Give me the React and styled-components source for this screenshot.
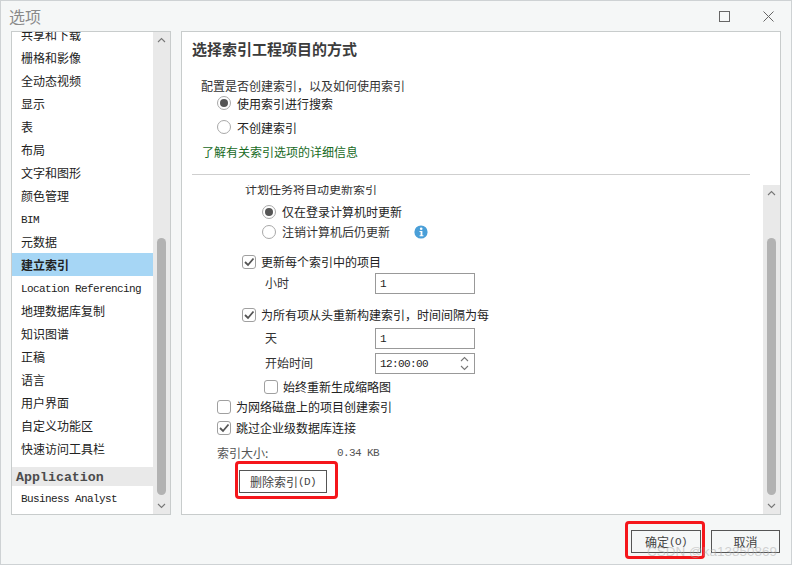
import React from 'react';
import styled, { createGlobalStyle } from 'styled-components';

const cjk = '"Noto Sans CJK SC", "Noto Sans", sans-serif';
const mono = '"Liberation Mono", "Noto Sans CJK SC", monospace';

const GlobalStyle = createGlobalStyle`
  html, body {
    margin: 0;
    padding: 0;
    background: #f5f7f7;
  }
  * {
    box-sizing: border-box;
  }
`;

const Dialog = styled.div`
  position: relative;
  width: 792px;
  height: 565px;
  display: flex;
  flex-direction: column;
  overflow: hidden;
  background: #f5f7f7;
  border: 1px solid #ced2d4;
  font-family: ${cjk};
  font-size: 12px;
  color: #333;
`;

const TitleBar = styled.div`
  height: 30px;
  flex: none;
  display: flex;
  align-items: center;
  padding: 0 1px 0 8px;
`;

const Title = styled.div`
  flex: 1;
  font-size: 16px;
  color: #8a8a8a;
`;

const WindowButton = styled.div`
  width: 44px;
  height: 30px;
  display: flex;
  align-items: center;
  justify-content: center;
`;

const Body = styled.div`
  height: 484px;
  flex: none;
  display: flex;
  gap: 10px;
  padding: 0 10px;
`;

const Panel = styled.div`
  display: flex;
  background: #fff;
  border: 1px solid #c8cccc;
  width: ${(p) => p.$width}px;
  overflow: hidden;
`;

const NavList = styled.div`
  flex: 1;
  min-width: 0;
  overflow: hidden;
`;

const NavItems = styled.div`
  margin-top: -9px;
`;

const NavItem = styled.div`
  height: 23px;
  line-height: 23px;
  padding-left: 9px;
  white-space: nowrap;
  color: #222;
  font-weight: ${(p) => (p.$active ? 700 : 400)};
  background: ${(p) => (p.$active ? '#a6d6f5' : 'transparent')};
`;

const NavLatin = styled(NavItem)`
  line-height: 26px;
  font-family: ${mono};
  font-size: 11px;
  letter-spacing: -0.6px;
`;

const NavGroup = styled.div`
  height: 19px;
  line-height: 21px;
  margin-top: 7px;
  padding-left: 4px;
  background: #e9e9e9;
  color: #4c4c4c;
  font-family: ${mono};
  font-size: 13.3px;
  font-weight: 700;
`;

const ScrollTrack = styled.div`
  width: 17px;
  flex: none;
  display: flex;
  flex-direction: column;
  align-items: center;
  background: #e9e9e9;
`;

const ScrollArrow = styled.div`
  height: 16px;
  flex: none;
  display: flex;
  align-items: center;
  justify-content: center;
  margin-top: ${(p) => (p.$down ? 'auto' : '0')};
`;

const ScrollThumb = styled.div`
  width: 9px;
  height: 257px;
  flex: none;
  margin-top: ${(p) => p.$top}px;
  border-radius: 5px;
  background: #b2b2b2;
`;

const Content = styled.div`
  flex: 1;
  min-width: 0;
  display: flex;
  flex-direction: column;
`;

const TopSection = styled.div`
  height: 142px;
  flex: none;
  padding: 0 30px 0 10px;
`;

const Heading = styled.h2`
  margin: 0;
  height: 35px;
  padding-top: 7px;
  line-height: 20px;
  font-size: 15px;
  font-weight: 700;
  color: #3c3c3c;
`;

const Row = styled.div`
  display: flex;
  align-items: center;
  white-space: nowrap;
  height: ${(p) => p.$h || 20}px;
  margin-top: ${(p) => p.$top || 0}px;
  padding-left: ${(p) => p.$indent || 0}px;
  color: ${(p) => p.$color || '#333'};
`;

const Divider = styled.div`
  height: 1px;
  flex: none;
  margin: 0 30px 0 10px;
  background: #cfcfcf;
`;

const LowerSection = styled.div`
  flex: 1;
  min-height: 0;
  margin-top: 10px;
  display: flex;
`;

const ScrollPane = styled.div`
  flex: 1;
  min-width: 0;
  overflow: hidden;
`;

const PaneInner = styled.div`
  margin-top: -6px;
  padding-left: 1px;
`;

const Label = styled.span`
  margin-bottom: 2px;
`;

const RadioMark = styled.span`
  width: 14px;
  height: 14px;
  flex: none;
  margin-right: 6px;
  display: flex;
  align-items: center;
  justify-content: center;
  border: 1px solid #a8a8a8;
  border-radius: 50%;
  background: #fff;

  &::after {
    content: '';
    width: 8px;
    height: 8px;
    border-radius: 50%;
    background: ${(p) => (p.$checked ? '#555' : 'transparent')};
  }
`;

const CheckMark = styled.span`
  width: 14px;
  height: 14px;
  flex: none;
  margin-right: 5px;
  display: flex;
  align-items: center;
  justify-content: center;
  border: 1px solid #a0a0a0;
  border-radius: 3px;
  background: #fff;
`;

const FieldLabel = styled(Label)`
  width: 110px;
  flex: none;
`;

const SizeLabel = styled(Label)`
  width: 120px;
  flex: none;
`;

const Input = styled.div`
  width: 100px;
  height: 21px;
  flex: none;
  display: flex;
  align-items: center;
  justify-content: space-between;
  padding: 0 4px;
  border: 1px solid #999;
  background: #fff;
  font-family: ${mono};
  font-size: 11px;
  letter-spacing: -0.6px;
  color: #222;
`;

const Spinner = styled.div`
  display: flex;
  flex-direction: column;
  gap: 3px;
  margin-right: 1px;
`;

const MonoText = styled.span`
  font-family: ${mono};
  font-size: 11px;
  letter-spacing: -0.6px;
`;

const InfoWrap = styled.span`
  display: flex;
  margin-left: 24px;
`;

const ButtonWrap = styled.div`
  position: relative;
  flex: none;
  margin-left: ${(p) => p.$left || 0}px;
  margin-top: ${(p) => p.$top || 0}px;
  width: ${(p) => p.$width}px;
`;

const Button = styled.button`
  width: 100%;
  height: 23px;
  display: flex;
  align-items: center;
  justify-content: center;
  padding: 0;
  border: 1px solid #555;
  background: transparent;
  color: #444;
  font-family: ${cjk};
  font-size: 12px;
`;

const RedRing = styled.div`
  position: absolute;
  top: ${(p) => p.$t}px;
  left: ${(p) => p.$l}px;
  right: ${(p) => p.$r}px;
  bottom: ${(p) => p.$b}px;
  border: 3px solid #f5161b;
  border-radius: 4px;
  pointer-events: none;
`;

const Footer = styled.div`
  flex: 1;
  display: flex;
  justify-content: flex-end;
  align-items: flex-start;
  gap: 10px;
  padding: 15px 11px 0 0;
`;

const Watermark = styled.div`
  position: absolute;
  left: 646px;
  top: 542px;
  font-family: "Liberation Sans", sans-serif;
  font-size: 13.5px;
  line-height: 18px;
  color: rgba(170, 170, 170, 0.5);
  white-space: nowrap;
  pointer-events: none;
`;

const Chevron = ({ down, color = '#777' }) => (
  <svg width="9" height="6" viewBox="0 0 9 6" fill="none" stroke={color} strokeWidth="1.1">
    <polyline points={down ? '1,1 4.5,4.5 8,1' : '1,5 4.5,1.5 8,5'} />
  </svg>
);

const Tick = () => (
  <svg width="12" height="12" viewBox="0 0 12 12" fill="none" stroke="#555" strokeWidth="1.8">
    <polyline points="2,6 5,9 10.5,2.5" />
  </svg>
);

const InfoIcon = () => (
  <svg width="14" height="14" viewBox="0 0 14 14">
    <circle cx="7" cy="7" r="6.6" fill="#4a9fd8" />
    <circle cx="7.2" cy="3.8" r="1.3" fill="#fff" />
    <path d="M5.5 6h2.9v4.2h1v1H5.6v-1h1V7h-1.100z" fill="#fff" />
  </svg>
);

const Scrollbar = ({ thumbTop }) => (
  <ScrollTrack>
    <ScrollArrow>
      <Chevron />
    </ScrollArrow>
    <ScrollThumb $top={thumbTop} />
    <ScrollArrow $down>
      <Chevron down />
    </ScrollArrow>
  </ScrollTrack>
);

const Radio = ({ checked, children }) => (
  <>
    <RadioMark $checked={checked} />
    {children}
  </>
);

const Check = ({ checked, children }) => (
  <>
    <CheckMark>{checked && <Tick />}</CheckMark>
    {children}
  </>
);

const navTop = ['共享和下载', '栅格和影像', '全动态视频', '显示', '表', '布局', '文字和图形', '颜色管理'];
const navBottom = ['地理数据库复制', '知识图谱', '正稿', '语言', '用户界面', '自定义功能区', '快速访问工具栏'];

export default function App() {
  return (
    <Dialog>
      <GlobalStyle />
      <TitleBar>
        <Title>选项</Title>
        <WindowButton>
          <svg width="11" height="11" viewBox="0 0 11 11" fill="none" stroke="#666" strokeWidth="1">
            <rect x="0.5" y="0.5" width="10" height="10" />
          </svg>
        </WindowButton>
        <WindowButton>
          <svg width="11" height="11" viewBox="0 0 11 11" fill="none" stroke="#666" strokeWidth="1">
            <path d="M0.5 0.5l10 10M10.500 0.5l-10 10" />
          </svg>
        </WindowButton>
      </TitleBar>

      <Body>
        <Panel $width={160}>
          <NavList>
            <NavItems>
              {navTop.map((item) => (
                <NavItem key={item}>{item}</NavItem>
              ))}
              <NavLatin>BIM</NavLatin>
              <NavItem>元数据</NavItem>
              <NavItem $active>建立索引</NavItem>
              <NavLatin>Location Referencing</NavLatin>
              {navBottom.map((item) => (
                <NavItem key={item}>{item}</NavItem>
              ))}
              <NavGroup>Application</NavGroup>
              <NavLatin>Business Analyst</NavLatin>
            </NavItems>
          </NavList>
          <Scrollbar thumbTop={190} />
        </Panel>

        <Panel $width={600}>
          <Content>
            <TopSection>
              <Heading>选择索引工程项目的方式</Heading>
              <Row $top={8} $indent={9}>配置是否创建索引，以及如何使用索引</Row>
              <Row $top={-2} $indent={25} $color="#222">
                <Radio checked>使用索引进行搜索</Radio>
              </Row>
              <Row $top={4} $indent={25} $color="#222">
                <Radio>不创建索引</Radio>
              </Row>
              <Row $top={4} $indent={10} $color="#176a1e">了解有关索引选项的详细信息</Row>
            </TopSection>
            <Divider />
            <LowerSection>
              <ScrollPane>
                <PaneInner>
                  <Row $indent={62}>
                    <Label>计划任务将自动更新索引</Label>
                  </Row>
                  <Row $top={3} $indent={79} $color="#222">
                    <Radio checked>
                      <Label>仅在登录计算机时更新</Label>
                    </Radio>
                  </Row>
                  <Row $indent={79}>
                    <Radio>
                      <Label>注销计算机后仍更新</Label>
                    </Radio>
                    <InfoWrap>
                      <InfoIcon />
                    </InfoWrap>
                  </Row>
                  <Row $top={10} $indent={59} $color="#222">
                    <Check checked>
                      <Label>更新每个索引中的项目</Label>
                    </Check>
                  </Row>
                  <Row $h={21} $top={1} $indent={82}>
                    <FieldLabel>小时</FieldLabel>
                    <Input>1</Input>
                  </Row>
                  <Row $top={11} $indent={59} $color="#222">
                    <Check checked>
                      <Label>为所有项从头重新构建索引，时间间隔为每</Label>
                    </Check>
                  </Row>
                  <Row $h={21} $top={3} $indent={82}>
                    <FieldLabel>天</FieldLabel>
                    <Input>1</Input>
                  </Row>
                  <Row $h={21} $top={4} $indent={82}>
                    <FieldLabel>开始时间</FieldLabel>
                    <Input>
                      <span>12:00:00</span>
                      <Spinner>
                        <Chevron />
                        <Chevron down />
                      </Spinner>
                    </Input>
                  </Row>
                  <Row $top={3} $indent={81} $color="#222">
                    <Check>
                      <Label>始终重新生成缩略图</Label>
                    </Check>
                  </Row>
                  <Row $indent={34} $color="#222">
                    <Check>
                      <Label>为网络磁盘上的项目创建索引</Label>
                    </Check>
                  </Row>
                  <Row $top={1} $indent={34} $color="#222">
                    <Check checked>
                      <Label>跳过企业级数据库连接</Label>
                    </Check>
                  </Row>
                  <Row $top={5} $indent={34} $color="#555">
                    <SizeLabel>索引大小:</SizeLabel>
                    <MonoText>0.34 KB</MonoText>
                  </Row>
                  <ButtonWrap $left={56} $top={7} $width={88}>
                    <Button>
                      删除索引<MonoText>(D)</MonoText>
                    </Button>
                    <RedRing $t={-9} $l={-4} $r={-11} $b={-6} />
                  </ButtonWrap>
                </PaneInner>
              </ScrollPane>
              <Scrollbar thumbTop={37} />
            </LowerSection>
          </Content>
        </Panel>
      </Body>

      <Footer>
        <ButtonWrap $width={70}>
          <Button>
            确定<MonoText>(O)</MonoText>
          </Button>
          <RedRing $t={-9} $l={-6} $r={-4} $b={-6} />
        </ButtonWrap>
        <ButtonWrap $width={69}>
          <Button>取消</Button>
        </ButtonWrap>
      </Footer>
      <Watermark>CSDN @ka13850869</Watermark>
    </Dialog>
  );
}
